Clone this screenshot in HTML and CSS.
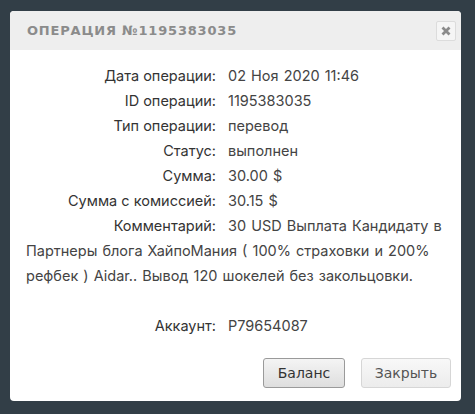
FILE: index.html
```html
<!DOCTYPE html>
<html lang="ru">
<head>
<meta charset="utf-8">
<link rel="stylesheet" href="styles.css">
</head>
<body>
<div class="dialog">
  <div class="header">
    <div class="title">Операция №1195383035</div>
    <button class="close" aria-label="close">
      <svg width="10" height="10" viewBox="0 0 10 10"><path d="M1.5 1.5 L8.5 8.5 M8.5 1.5 L1.5 8.5" stroke="#8a8a8a" stroke-width="2.8" stroke-linecap="butt"/></svg>
    </button>
  </div>
  <div class="content">
    <div class="row"><span class="label">Дата операции:</span>02 Ноя 2020 11:46</div>
    <div class="row"><span class="label">ID операции:</span>1195383035</div>
    <div class="row"><span class="label">Тип операции:</span>перевод</div>
    <div class="row"><span class="label">Статус:</span>выполнен</div>
    <div class="row"><span class="label">Сумма:</span>30.00 $</div>
    <div class="row"><span class="label">Сумма с комиссией:</span>30.15 $</div>
    <div class="row"><span class="label">Комментарий:</span>30 USD Выплата Кандидату в Партнеры блога ХайпоМания ( 100% страховки и 200% рефбек ) Aidar.. Вывод 120 шокелей без закольцовки.</div>
    <div class="spacer"></div>
    <div class="row"><span class="label">Аккаунт:</span>P79654087</div>
  </div>
  <div class="footer">
    <button class="btn btn-primary">Баланс</button>
    <button class="btn btn-light">Закрыть</button>
  </div>
</div>
</body>
</html>
```
FILE: styles.css
```css
html, body {
  margin: 0;
  padding: 0;
}
body {
  background: #323e47;
  width: 475px;
  height: 414px;
  overflow: hidden;
  padding-top: 11px;
  padding-left: 10px;
  box-sizing: border-box;
}
.dialog {
  width: 451px;
  height: 390px;
  background: #fff;
  border-radius: 4px;
  overflow: hidden;
  display: flex;
  flex-direction: column;
}
.header {
  height: 39px;
  background: #eeeeee;
  display: flex;
  align-items: center;
  justify-content: space-between;
  padding: 0 5px 0 17px;
}
.title {
  font-family: "DejaVu Sans", sans-serif;
  font-weight: bold;
  font-size: 13px;
  letter-spacing: 0.8px;
  text-transform: uppercase;
  color: #8b8b8b;
}
.close {
  width: 20px;
  height: 20px;
  padding: 0;
  margin: 0;
  border: 1px solid #dcdcdc;
  border-radius: 2px;
  background: #f5f5f5;
  display: flex;
  align-items: center;
  justify-content: center;
}
.content {
  padding: 13px 16px 0 16px;
  font-family: "Inter", sans-serif;
  font-size: 14.5px;
  word-spacing: 1px;
  line-height: 25px;
  color: #444;
}
.label {
  display: inline-block;
  width: 190px;
  text-align: right;
  margin-right: 12px;
  color: #333;
  word-spacing: 0;
}
.spacer {
  height: 25px;
}
.footer {
  display: flex;
  justify-content: flex-end;
  gap: 16px;
  padding: 20px 10px 0 0;
}
.btn {
  height: 30px;
  font-family: "DejaVu Sans", sans-serif;
  font-size: 14px;
  border-radius: 3px;
  padding: 0;
}
.btn-primary {
  width: 82px;
  color: #333;
  border: 1px solid #9a9a9a;
  background: linear-gradient(#f4f4f4, #dedede);
}
.btn-light {
  width: 90px;
  color: #555;
  border: 1px solid #d6d6d6;
  background: linear-gradient(#f8f8f8, #ececec);
}
```
